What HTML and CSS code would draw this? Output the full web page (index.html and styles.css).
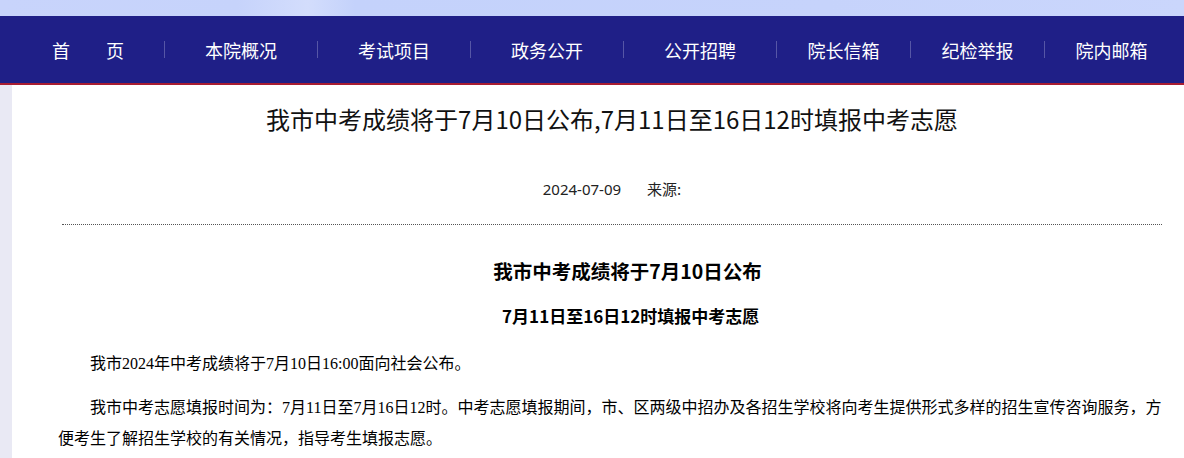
FILE: index.html
```html
<!DOCTYPE html>
<html lang="zh-CN">
<head>
<meta charset="utf-8">
<title>我市中考成绩将于7月10日公布</title>
<link rel="stylesheet" href="styles.css">
</head>
<body>
<div class="top-strip"></div>
<div class="nav">
  <div class="nav-inner">
    <a class="nav-item wide">首　　页</a>
    <span class="sep"></span>
    <a class="nav-item wide">本院概况</a>
    <span class="sep"></span>
    <a class="nav-item wide">考试项目</a>
    <span class="sep"></span>
    <a class="nav-item wide">政务公开</a>
    <span class="sep"></span>
    <a class="nav-item wide">公开招聘</a>
    <span class="sep"></span>
    <a class="nav-item narrow">院长信箱</a>
    <span class="sep"></span>
    <a class="nav-item narrow">纪检举报</a>
    <span class="sep"></span>
    <a class="nav-item narrow">院内邮箱</a>
  </div>
</div>
<div class="page">
  <h1 class="title">我市中考成绩将于7月10日公布,7月11日至16日12时填报中考志愿</h1>
  <div class="meta"><span class="date">2024-07-09</span><span class="source">来源:</span></div>
  <div class="rule"></div>
  <div class="article">
    <h2 class="sub1">我市中考成绩将于7月10日公布</h2>
    <h3 class="sub2">7月11日至16日12时填报中考志愿</h3>
    <p class="para">我市2024年中考成绩将于7月10日16:00面向社会公布。</p>
    <p class="para">我市中考志愿填报时间为：7月11日至7月16日12时。中考志愿填报期间，市、区两级中招办及各招生学校将向考生提供形式多样的招生宣传咨询服务，方便考生了解招生学校的有关情况，指导考生填报志愿。</p>
  </div>
</div>
</body>
</html>
```

FILE: styles.css
```css
html, body {
  margin: 0;
  padding: 0;
}
body {
  background: #e9e9f4;
  overflow: hidden;
  font-family: "Noto Sans CJK SC", sans-serif;
  color: #222;
}
.top-strip {
  height: 16px;
  background: linear-gradient(90deg, #c8d4fb 0%, #c6d3fb 20%, #d3ddfc 26%, #c4d2fb 30%, #c6d3fb 70%, #cad6fc 100%);
}
.nav {
  height: 67px;
  background: #1f1f87;
  border-bottom: 2px solid #a81d32;
}
.nav-inner {
  margin-left: 12px;
  height: 67px;
  display: flex;
  align-items: center;
}
.nav-item {
  color: #fff;
  font-size: 18px;
  line-height: 24px;
  text-align: center;
  text-decoration: none;
}
.nav-item.wide {
  width: 152px;
}
.nav-item.narrow {
  width: 133px;
}
.sep {
  width: 1px;
  height: 17px;
  background: #5656a6;
}
.page {
  width: 1100px;
  margin-left: 12px;
  padding: 18px 50px 40px;
  background: #fff;
  min-height: 400px;
}
.title {
  margin: 0;
  font-size: 24px;
  line-height: 32px;
  font-weight: normal;
  text-align: center;
  color: #111;
}
.meta {
  margin-top: 44px;
  font-size: 15px;
  line-height: 20px;
  text-align: center;
  color: #222;
}
.date {
  margin-right: 26px;
  font-family: "Noto Sans", "Noto Sans CJK SC", sans-serif;
}
.rule {
  margin-top: 25px;
  border-top: 1px dotted #555;
}
.article {
  margin-left: -4px;
  margin-right: -4px;
}
.sub1 {
  margin: 32px 0 0;
  font-size: 19.5px;
  line-height: 28px;
  font-weight: bold;
  text-align: center;
  text-indent: 1.6em;
  color: #000;
}
.sub2 {
  margin: 19px 0 0;
  font-size: 17px;
  line-height: 24px;
  font-weight: bold;
  text-align: center;
  text-indent: 2.2em;
  color: #000;
}
.para {
  margin: 20px 0 0;
  font-family: "Liberation Serif", "Noto Sans CJK SC", serif;
  font-size: 16px;
  line-height: 31px;
  text-indent: 2em;
  color: #000;
}
.para + .para {
  margin-top: 13px;
}
```
